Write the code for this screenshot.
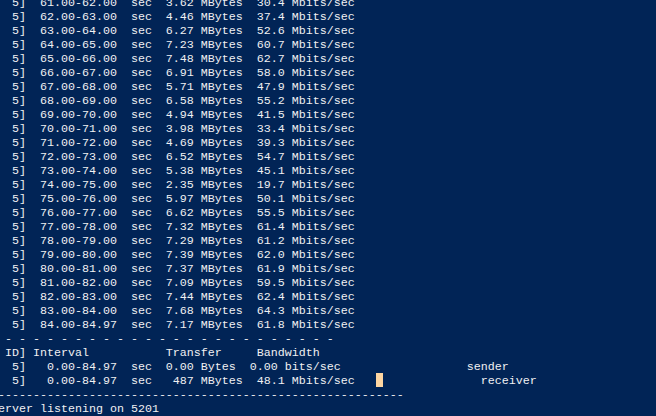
import React from "react";

const rows: [number, number, string, string][] = [
  [61, 62, "3.62", "30.4"],
  [62, 63, "4.46", "37.4"],
  [63, 64, "6.27", "52.6"],
  [64, 65, "7.23", "60.7"],
  [65, 66, "7.48", "62.7"],
  [66, 67, "6.91", "58.0"],
  [67, 68, "5.71", "47.9"],
  [68, 69, "6.58", "55.2"],
  [69, 70, "4.94", "41.5"],
  [70, 71, "3.98", "33.4"],
  [71, 72, "4.69", "39.3"],
  [72, 73, "6.52", "54.7"],
  [73, 74, "5.38", "45.1"],
  [74, 75, "2.35", "19.7"],
  [75, 76, "5.97", "50.1"],
  [76, 77, "6.62", "55.5"],
  [77, 78, "7.32", "61.4"],
  [78, 79, "7.29", "61.2"],
  [79, 80, "7.39", "62.0"],
  [80, 81, "7.37", "61.9"],
  [81, 82, "7.09", "59.5"],
  [82, 83, "7.44", "62.4"],
  [83, 84, "7.68", "64.3"],
  [84, 84.97, "7.17", "61.8"],
];

export default function App() {
  const lines = rows.map(
    ([a, b, mb, mbit]) =>
      `[  5]  ${a.toFixed(2)}-${b.toFixed(2)}  sec  ${mb} MBytes  ${mbit} Mbits/sec`
  );
  return (
    <div className="w-[656px] h-[416px] overflow-hidden bg-[#012456]">
      <div
        className="-ml-[9px] -mt-[4px] whitespace-pre text-[11.667px] leading-[14px] text-[#f0f0f2]"
        style={{ fontFamily: '"Liberation Mono", monospace' }}
      >
        {lines.map((l, i) => (
          <div key={i}>{l}</div>
        ))}
        <div>{"- - - - - - - - - - - - - - - - - - - - - - - - -"}</div>
        <div>{"[ ID] Interval           Transfer     Bandwidth"}</div>
        <div>{"[  5]   0.00-84.97  sec  0.00 Bytes  0.00 bits/sec                  sender"}</div>
        <div>
          {"[  5]   0.00-84.97  sec   487 MBytes  48.1 Mbits/sec   "}
          <span className="relative -top-[1px] inline-block w-[7px] h-[14px] align-top bg-[#fdd6a2]" />
          {"              receiver"}
        </div>
        <div>{"-----------------------------------------------------------"}</div>
        <div>{"Server listening on 5201"}</div>
      </div>
    </div>
  );
}
